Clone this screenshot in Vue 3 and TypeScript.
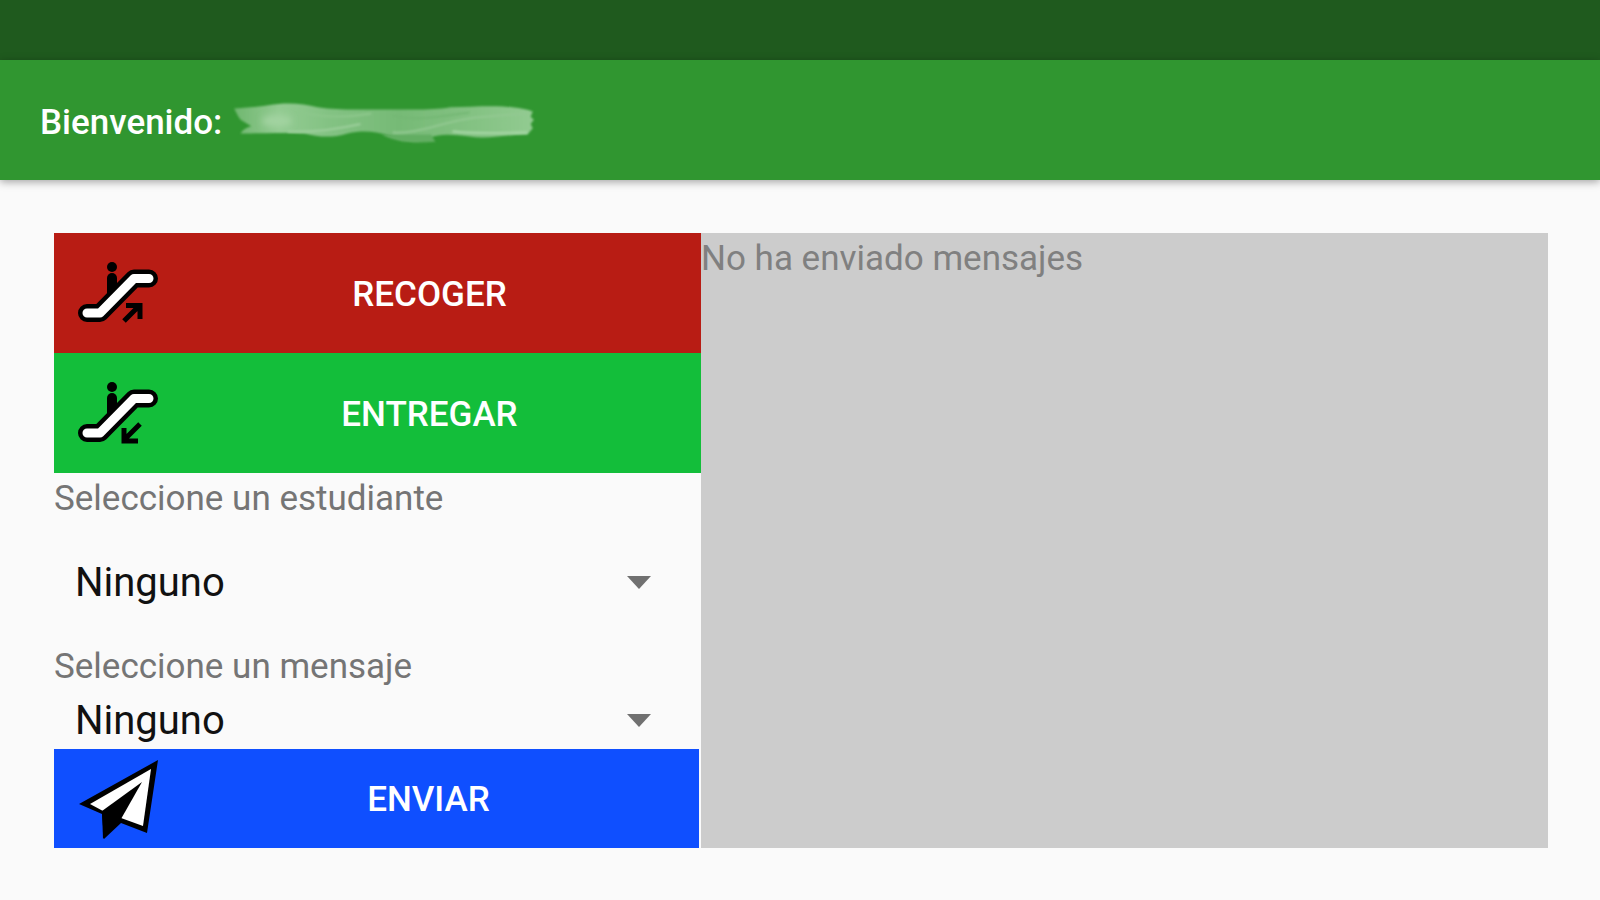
<script setup lang="ts">
import { ref } from 'vue'

interface Trip {
  id: string
  label: string
  arrow: string
}

const trips: Trip[] = [
  { id: 'pickup', label: 'RECOGER', arrow: 'M46 59 L61 44 M48 43.5 H62 V57' },
  { id: 'dropoff', label: 'ENTREGAR', arrow: 'M62 42 L46 58 M46 46 V59 H60' },
]

const students: string[] = ['Ninguno']
const messages: string[] = ['Ninguno']
const student = ref<string>(students[0])
const message = ref<string>(messages[0])
</script>

<template>
  <div class="page">
    <div class="status"></div>
    <header class="bar">
      <h1 class="title">Bienvenido:</h1>
      <svg class="smear" viewBox="0 0 284 46" preserveAspectRatio="none" aria-hidden="true">
        <defs>
          <linearGradient id="smear-fill" x1="0" x2="1" y1="0" y2="0">
            <stop offset="0" stop-color="#6fb76f" />
            <stop offset="0.15" stop-color="#93cb92" />
            <stop offset="0.32" stop-color="#83c283" />
            <stop offset="0.55" stop-color="#76ba76" />
            <stop offset="0.8" stop-color="#84c283" />
            <stop offset="1" stop-color="#92cb91" />
          </linearGradient>
          <filter id="smear-soft" x="-5%" y="-20%" width="110%" height="140%">
            <feGaussianBlur stdDeviation="1" />
          </filter>
          <filter id="smear-softer" x="-50%" y="-80%" width="200%" height="260%">
            <feGaussianBlur stdDeviation="3" />
          </filter>
        </defs>
        <path
          d="M2 9 C14 8 22 8 34 6 C50 3 66 4 80 8 C100 11 118 10 140 10 C170 10 186 11 204 8 C226 7 250 6 262 8 C270 9 276 10 281 12 L279 17 L282 20 L279 24 L281 28 L276 34 C256 34 238 39 222 36 C206 34 194 33 186 37 C172 42 160 40 146 35 C134 31 122 30 108 33 C92 38 80 36 68 33 C48 32 24 33 8 33 C10 29 14 27 18 26 L8 20 L6 17 Z"
          fill="url(#smear-fill)"
          filter="url(#smear-soft)"
        />
        <ellipse cx="42" cy="21" rx="14" ry="6" fill="#a2d3a0" filter="url(#smear-softer)" />
        <path d="M140 34 C156 43 174 42 190 41 L186 34 Z" fill="#62ae62" filter="url(#smear-soft)" />
        <g fill="none" stroke-width="2" filter="url(#smear-soft)">
          <path d="M52 31 C70 32 90 31 120 24" stroke="#9ccf9b" />
          <path d="M60 12 C84 18 104 18 130 14" stroke="#8cc78b" />
          <path d="M150 32 C174 34 196 22 226 18 C244 16 260 15 276 14" stroke="#92c991" />
          <path d="M206 31 C230 34 258 32 276 32" stroke="#a6d7a5" />
          <path d="M150 16 C176 22 196 16 222 13" stroke="#74b874" />
        </g>
      </svg>
    </header>

    <main class="content">
      <form class="controls" @submit.prevent>
        <button v-for="trip in trips" :key="trip.id" type="button" class="action" :class="trip.id">
          <svg class="icon" viewBox="0 0 80 64" aria-hidden="true">
            <circle cx="34" cy="5" r="5" />
            <path d="M34 16 V38" fill="none" stroke="#000" stroke-width="10" stroke-linecap="round" />
            <path
              d="M9 51 H22 L56 16.500 H71"
              fill="none"
              stroke="#000"
              stroke-width="18"
              stroke-linecap="round"
              stroke-linejoin="round"
            />
            <path
              d="M9 51 H22 L56 16.500 H71"
              fill="none"
              stroke="#fff"
              stroke-width="9"
              stroke-linecap="round"
              stroke-linejoin="round"
            />
            <path :d="trip.arrow" fill="none" stroke="#000" stroke-width="5" />
          </svg>
          <span class="caption">{{ trip.label }}</span>
        </button>

        <label class="label" for="student">Seleccione un estudiante</label>
        <div class="picker tall">
          <select id="student" v-model="student">
            <option v-for="name in students" :key="name">{{ name }}</option>
          </select>
          <svg class="caret" viewBox="0 0 24 13" aria-hidden="true"><path d="M0 0 H24 L12 13 Z" /></svg>
        </div>

        <label class="label" for="message">Seleccione un mensaje</label>
        <div class="picker">
          <select id="message" v-model="message">
            <option v-for="text in messages" :key="text">{{ text }}</option>
          </select>
          <svg class="caret" viewBox="0 0 24 13" aria-hidden="true"><path d="M0 0 H24 L12 13 Z" /></svg>
        </div>

        <button type="submit" class="action send">
          <svg class="icon" viewBox="0 0 80 80" aria-hidden="true">
            <path d="M1 44 L80 0 L69 73 L43 63 L26 79 L24 54 Z" />
            <path d="M12 44 L73 9 L65 66 L43 58 L25 51 Z" fill="#fff" />
            <path d="M64 22 L24 51 L25 79 L43 59 Z" />
          </svg>
          <span class="caption">ENVIAR</span>
        </button>
      </form>

      <section class="messages">
        <p class="empty">No ha enviado mensajes</p>
      </section>
    </main>
  </div>
</template>

<style>
body {
  margin: 0;
  background: #fafafa;
}
</style>

<style scoped>
.page {
  min-height: 100vh;
  background: #fafafa;
  font-family: Roboto, 'Noto Sans', sans-serif;
  font-size: 35px;
}

.status {
  height: 60px;
  background: #1f5a1e;
}

.bar {
  display: flex;
  align-items: center;
  gap: 10px;
  box-sizing: border-box;
  height: 120px;
  padding: 6px 40px 0;
  background: #309630;
  box-shadow: 0 2px 8px rgba(0, 0, 0, 0.35);
}

.title {
  margin: 0;
  color: #fff;
  font-size: 35px;
  font-weight: 500;
  line-height: 52px;
}

.smear {
  width: 304px;
  height: 48px;
}

.content {
  display: grid;
  grid-template-columns: 647fr 847fr;
  padding: 53px 52px 53px 54px;
}

.controls {
  display: flex;
  flex-direction: column;
}

.action {
  display: flex;
  align-items: center;
  height: 120px;
  margin: 0;
  padding: 2px 0 0 24px;
  border: 0;
  color: #fff;
  font: inherit;
  font-weight: 500;
  cursor: pointer;
}

.pickup {
  background: #b81c14;
}

.dropoff {
  background: #13be3a;
}

.send {
  height: 99px;
  margin-right: 2px;
  background: #0f4fff;
}

.icon {
  flex: none;
  width: 80px;
}

.caption {
  flex: 1;
  text-align: center;
}

.label {
  color: #757575;
  line-height: 52px;
}

.picker {
  display: grid;
  grid-template-columns: 1fr 50px;
  align-items: center;
  box-sizing: border-box;
  height: 56px;
  padding-bottom: 2px;
}

.tall {
  height: 116px;
}

.picker select {
  grid-area: 1 / 1 / 2 / 3;
  width: 100%;
  height: 100%;
  margin: 0;
  padding: 0 80px 0 21px;
  border: 0;
  background: transparent;
  color: #111;
  font: inherit;
  font-size: 40px;
  appearance: none;
}

.caret {
  grid-area: 1 / 1 / 2 / 2;
  justify-self: end;
  width: 24px;
  height: 13px;
  fill: #707070;
  pointer-events: none;
}

.messages {
  background: #ccc;
}

.empty {
  margin: 0;
  color: #808080;
  line-height: 52px;
}
</style>
